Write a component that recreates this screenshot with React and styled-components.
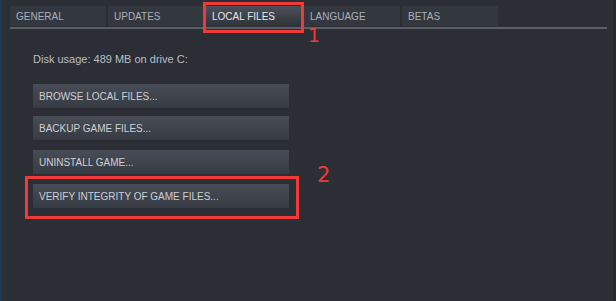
import React from 'react'
import styled, { createGlobalStyle } from 'styled-components'

const GlobalStyle = createGlobalStyle`
  html, body {
    margin: 0;
    padding: 0;
    background: #2b2e34;
  }
  body {
    font-family: Arial, 'Liberation Sans', sans-serif;
  }
`

const tabs = ['GENERAL', 'UPDATES', 'LOCAL FILES', 'LANGUAGE', 'BETAS']

const actions = [
  { label: 'BROWSE LOCAL FILES...' },
  { label: 'BACKUP GAME FILES...' },
  { label: 'UNINSTALL GAME...', spaced: true },
  { label: 'VERIFY INTEGRITY OF GAME FILES...', spaced: true, marked: '2' },
]

const App = () => {
  return (
    <>
      <GlobalStyle />
      <Window>
        <TabBar>
          {tabs.map((t, i) => (
            <Tab key={t} $active={i === 2}>
              {t}
              {i === 2 && <Mark $left='102px' $top='20px' $size='19px'>1</Mark>}
            </Tab>
          ))}
        </TabBar>
        <Content>
          <DiskUsage>Disk usage: 489 MB on drive C:</DiskUsage>
          <Actions>
            {actions.map((a) => (
              <ActionButton key={a.label} $spaced={a.spaced} $marked={!!a.marked}>
                {a.label}
                {a.marked && <Mark $left='284px' $top='-19px' $size='21px'>{a.marked}</Mark>}
              </ActionButton>
            ))}
          </Actions>
        </Content>
      </Window>
    </>
  )
}

export default App

const Window = styled.div`
  width: 616px;
  height: 301px;
  box-sizing: border-box;
  background: #2b2e34;
  border-left: 2px solid #1d3956;
  border-right: 3px solid #25282d;
  padding: 6px 6px 0 8px;
  overflow: hidden;
`

const TabBar = styled.div`
  display: flex;
  gap: 2px;
  height: 20px;
  border-bottom: 2px solid #5b5f66;
  padding-bottom: 1px;
`

const Tab = styled.div`
  position: relative;
  width: 96px;
  box-sizing: border-box;
  padding-left: 6px;
  display: flex;
  align-items: center;
  font-size: 10px;
  color: ${(p) => (p.$active ? '#e4e7ec' : '#a9b0bb')};
  background: ${(p) =>
    p.$active ? 'linear-gradient(#4b5059, #2e3238)' : '#33373e'};
  height: ${(p) => (p.$active ? '21px' : '20px')};

  ${(p) =>
    p.$active &&
    `
    &::after {
      content: '';
      position: absolute;
      left: -3px;
      right: -2px;
      top: -4px;
      bottom: -6px;
      border: 3px solid #f03a3a;
    }
  `}
`

const Mark = styled.span`
  position: absolute;
  left: ${(p) => p.$left};
  top: ${(p) => p.$top};
  font-family: 'DejaVu Sans', sans-serif;
  font-size: ${(p) => p.$size};
  color: #f03a3a;
  line-height: 1;
`

const Content = styled.div`
  padding: 24px 0 0 23px;
`

const DiskUsage = styled.div`
  font-size: 11px;
  color: #b9bec6;
  height: 13px;
  line-height: 13px;
`

const Actions = styled.div`
  display: flex;
  flex-direction: column;
  gap: 8px;
  margin-top: 18px;
`

const ActionButton = styled.div`
  position: relative;
  width: 256px;
  height: 24px;
  box-sizing: border-box;
  padding-left: 6px;
  display: flex;
  align-items: center;
  font-size: 10px;
  color: #ccd0d6;
  background: linear-gradient(#474c56, #373b43);
  margin-top: ${(p) => (p.$spaced ? '2px' : '0')};

  ${(p) =>
    p.$marked &&
    `
    &::after {
      content: '';
      position: absolute;
      left: -8px;
      right: -10px;
      top: -8px;
      bottom: -11px;
      border: 3px solid #f03a3a;
    }
  `}
`
